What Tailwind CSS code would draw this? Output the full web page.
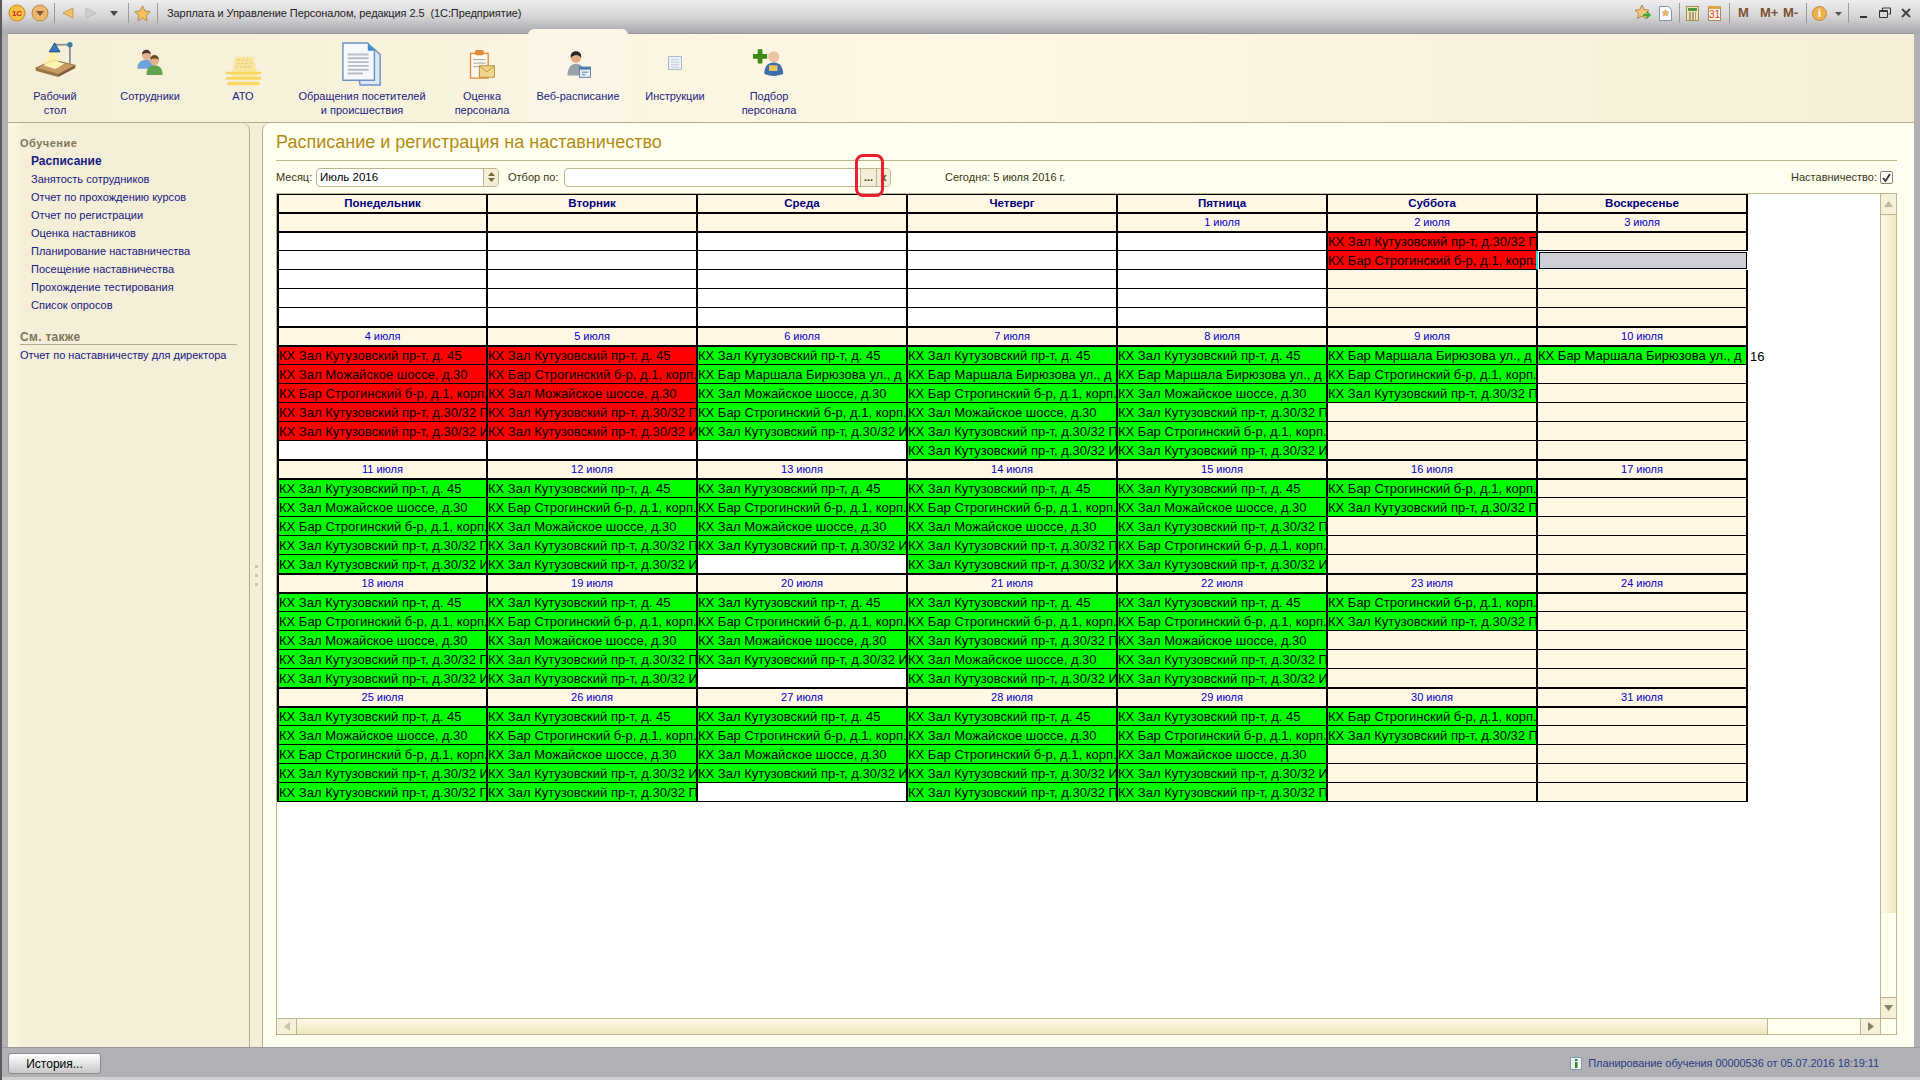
<!DOCTYPE html>
<html lang="ru">
<head>
<meta charset="UTF-8">
<title>Зарплата и Управление Персоналом</title>
<script src="https://cdn.jsdelivr.net/npm/@tailwindcss/browser@4"></script>
</head>
<body class="bg-[#b0b0b4]">
<div class="relative w-[1920px] h-[1080px] overflow-hidden flex flex-col font-['Liberation_Sans',Arial,sans-serif] text-[11px] bg-[#b1b1b5] border-l-2 border-[#5a5a5a]">

  <!-- title bar -->
  <header class="h-[33px] shrink-0 flex items-start pt-[3px] bg-linear-to-b from-[#eeeeee] via-[#d6d6d8] to-[#a9a9ad] text-[#222]">
    <div class="flex items-center h-[20px] w-full">
      <svg class="ml-[6px] w-[18px] h-[18px]" viewBox="0 0 18 18"><circle cx="9" cy="9" r="8" fill="#f6c244" stroke="#c8862a"/><text x="9" y="12" font-size="8" font-weight="700" text-anchor="middle" fill="#d4201c">1С</text></svg>
      <svg class="ml-[5px] w-[18px] h-[18px]" viewBox="0 0 18 18"><circle cx="9" cy="9" r="8" fill="#eeb66c" stroke="#b98a4c"/><path d="M5 7h8l-4 5z" fill="#7a5a34"/></svg>
      <div class="ml-[5px] w-px h-[20px] bg-[#9c9c9c]"></div>
      <svg class="ml-[6px] w-[14px] h-[14px]" viewBox="0 0 14 14"><path d="M12 2v10L2 7z" fill="#f2c26a" stroke="#c99a50"/></svg>
      <svg class="ml-[9px] w-[14px] h-[14px]" viewBox="0 0 14 14"><path d="M2 2v10l10-5z" fill="#cfcfcb" stroke="#bbb"/></svg>
      <svg class="ml-[11px] w-[10px] h-[10px]" viewBox="0 0 10 10"><path d="M1 3h8L5 8z" fill="#444"/></svg>
      <div class="ml-[9px] w-px h-[20px] bg-[#9c9c9c]"></div>
      <svg class="ml-[5px] w-[17px] h-[17px]" viewBox="0 0 18 18"><path d="M9 1l2.500 5.300 5.700.8-4.200 4 1 5.700L9 14l-5 2.800 1-5.700-4.200-4 5.700-.8z" fill="#f3c25c" stroke="#a98a4a"/></svg>
      <div class="ml-[6px] w-px h-[20px] bg-[#9c9c9c]"></div>
      <span class="ml-[9px] text-[11px] tracking-[-0.08px]">Зарплата и Управление Персоналом, редакция 2.5&nbsp; (1С:Предприятие)</span>

      <div class="ml-auto flex items-center pr-[8px]">
        <svg class="w-[18px] h-[18px]" viewBox="0 0 18 18"><path d="M8 1l2 4.600 5 .6-3.600 3.400 1 5L8 12l-4.400 2.600 1-5L1 6.200l5-.6z" fill="#f0c878" stroke="#a98a4a"/><path d="M9 10h4V7l4 4-4 4v-3H9z" fill="#3fa63a"/></svg>
        <svg class="ml-[7px] w-[13px] h-[15px]" viewBox="0 0 13 15"><path d="M.5.5h9l3 3v11H.5z" fill="#fff" stroke="#7f94ad"/><path d="M6.500 3.500l1 2.200 2.400.3-1.700 1.600.4 2.400-2.100-1.200-2.100 1.200.4-2.400L3.100 6l2.400-.3z" fill="#eeb858" stroke="#a98a4a" stroke-width=".5"/></svg>
        <div class="ml-[7px] w-px h-[20px] bg-[#9c9c9c]"></div>
        <svg class="ml-[6px] w-[13px] h-[15px]" viewBox="0 0 13 15"><rect x=".5" y=".5" width="12" height="14" fill="#f3e3b8" stroke="#a08c5c"/><rect x="2" y="2" width="9" height="3" fill="#4f9a3e"/><path d="M3 7h2M6 7h2M9 7h1M3 9h2M6 9h2M9 9h1M3 11h2M6 11h2M9 11h1M3 13h2M6 13h2M9 13h1" stroke="#6b5a3a"/></svg>
        <div class="ml-[9px] w-[13px] h-[15px] bg-[#fff6ea] border border-[#a08c5c] border-t-[3px] border-t-[#e0a24a] text-[#e0391c] text-[10px] leading-[11px] text-center">31</div>
        <div class="ml-[8px] w-px h-[20px] bg-[#9c9c9c]"></div>
        <span class="ml-[8px] w-[12px] text-[13px] font-bold text-[#7b5230]">M</span>
        <span class="ml-[10px] w-[18px] text-[13px] font-bold text-[#7b5230]">M+</span>
        <span class="ml-[5px] w-[18px] text-[13px] font-bold text-[#7b5230]">M-</span>
        <div class="ml-[5px] w-px h-[20px] bg-[#9c9c9c]"></div>
        <div class="ml-[5px] w-[15px] h-[15px] rounded-full bg-[#eeb24a] border border-[#b98a4c] text-white font-bold text-[11px] leading-[13px] text-center">i</div>
        <svg class="ml-[7px] w-[9px] h-[9px]" viewBox="0 0 9 9"><path d="M1 3h7L4.500 7z" fill="#555"/></svg>
        <div class="ml-[5px] w-px h-[20px] bg-[#9c9c9c]"></div>
        <svg class="ml-[9px] w-[12px] h-[12px]" viewBox="0 0 12 12"><path d="M2 10h7" stroke="#333" stroke-width="2"/></svg>
        <svg class="ml-[9px] w-[12px] h-[12px]" viewBox="0 0 12 12"><path d="M3.500 3V1h8v6H9.500M.5 3.500h8v7h-8zM.5 4.500h8" fill="none" stroke="#333"/></svg>
        <svg class="ml-[9px] w-[12px] h-[12px]" viewBox="0 0 12 12"><path d="M2 2l8 8M10 2l-8 8" stroke="#444" stroke-width="2"/></svg>
      </div>
    </div>
  </header>

  <!-- section toolbar -->
  <nav class="relative ml-[6px] w-[1906px] h-[90px] shrink-0 flex pl-[7px] bg-linear-to-r from-[#f5efd8] via-[#fef8e6] to-[#f5eed8] border-t border-[#9a9a9a] border-b border-b-[#b5ae8c] text-[#1a237e] text-[11px] leading-[14px] text-center">
    <div class="w-[80px]">
      <div class="h-[55px] flex justify-center items-start">
        <svg class="mt-[8px] w-[49px] h-[36px]" viewBox="0 4 50 40"><path d="M3 33l20-9 24 6-19 10z" fill="#c79a63" stroke="#8c6a3e"/><path d="M3 33v3l25 7v-3z" fill="#9c7344"/><path d="M28 40v3l19-10v-3z" fill="#7d5a32"/><path d="M12 30l10-5 13 3-10 6z" fill="#fff6cf"/><path d="M20 13l-8 17 18 2-4-19z" fill="#fff3a0" opacity=".8"/><path d="M41 7v22" stroke="#8a8f96" stroke-width="2"/><path d="M24 7h17" stroke="#8a8f96" stroke-width="2"/><path d="M18 15l6-10 6 10z" fill="#3577b8" stroke="#1f4f80"/><circle cx="41" cy="7" r="3" fill="#3a7ea8"/></svg>
      </div>
      <span>Рабочий<br>стол</span>
    </div>
    <div class="w-[110px]">
      <div class="h-[55px] flex justify-center items-start">
        <svg class="mt-[15px] w-[28px] h-[27px]" viewBox="0 0 30 30"><circle cx="11" cy="7" r="5" fill="#e6b28e"/><path d="M6 6c0-7 10-7 10 0-3-2-6-2-10 0z" fill="#4a3a2c"/><path d="M1 22c0-8 5-10 10-10s8 2 8 10z" fill="#6ea4dc"/><circle cx="20" cy="13" r="5" fill="#e6b28e"/><path d="M15 12c0-7 10-7 10 0-3-2-6-2-10 0z" fill="#6a4a2a"/><path d="M11 29c0-8 4-11 9-11s9 3 9 11z" fill="#62a24e"/></svg>
      </div>
      <span>Сотрудники</span>
    </div>
    <div class="w-[76px]">
      <div class="h-[55px] flex justify-center items-start">
        <svg class="mt-[21px] w-[39px] h-[32px]" viewBox="0 0 42 38"><path d="M11 2h22l6 28H6z" fill="#fbe6a0"/><path d="M0 20h42v3H0zM0 26h42v3H0zM2 32h38v4H2z" fill="#fbd660"/><path d="M14 6h16M13 10h18M12 14h20" stroke="#efcf7a" stroke-width="2" stroke-dasharray="3 2"/></svg>
      </div>
      <span>АТО</span>
    </div>
    <div class="ml-[7px] w-[148px]">
      <div class="h-[55px] flex justify-center items-start">
        <svg class="mt-[8px] w-[42px] h-[44px]" viewBox="0 0 44 46"><path d="M14 5h18l9 8v32H20z" fill="#dfe7f2" stroke="#6b93c6" stroke-width="1.500"/><path d="M2 1h26l7 8v31H2z" fill="#f6f8fb" stroke="#6b93c6" stroke-width="1.500"/><path d="M28 1v8h7z" fill="#3f8fd0"/><path d="M7 13h22M7 17h22M7 21h22M7 25h22M7 29h22M7 33h16" stroke="#b7bec8" stroke-width="2"/></svg>
      </div>
      <span>Обращения посетителей<br>и происшествия</span>
    </div>
    <div class="w-[92px]">
      <div class="h-[55px] flex justify-center items-start">
        <svg class="mt-[15px] w-[28px] h-[30px]" viewBox="0 0 30 34"><rect x="2" y="5" width="20" height="28" fill="#fff9ee" stroke="#e08a3a" stroke-width="1.500"/><rect x="7" y="1" width="10" height="6" rx="2" fill="#e08a3a"/><path d="M5 12h14M5 16h14M5 20h10" stroke="#8a9aa8"/><rect x="12" y="19" width="17" height="13" fill="#f2d68a" stroke="#a88a3e"/><path d="M12 19l8.500 7 8.500-7" fill="none" stroke="#a88a3e"/></svg>
      </div>
      <span>Оценка<br>персонала</span>
    </div>
    <div class="-mt-[5px] h-[93px] w-[100px] rounded-t-md bg-[#fbf6e6]">
      <div class="h-[60px] flex justify-center items-start">
        <svg class="mt-[21px] w-[29px] h-[29px]" viewBox="0 0 30 34"><circle cx="12" cy="9" r="6" fill="#e2ad88"/><path d="M6 9c-2-10 14-10 12 0-3-4-8-4-12 0z" fill="#262626"/><path d="M2 30c0-10 5-14 10-14 5 0 8 3 9 8l-4 6z" fill="#9aa3ac"/><rect x="16" y="20" width="13" height="12" fill="#e8eef5" stroke="#4a6d96"/><rect x="16" y="20" width="13" height="3" fill="#4a7dae"/><path d="M19 26h7M19 29h4" stroke="#4a6d96"/></svg>
      </div>
      <span>Веб-расписание</span>
    </div>
    <div class="w-[94px]">
      <div class="h-[55px] flex justify-center items-start">
        <svg class="mt-[22px] w-[14px] h-[14px]" viewBox="0 0 14 16" preserveAspectRatio="none"><path d="M.5.5h13v15H.5z" fill="#eef2f6" stroke="#9fb4c8"/><path d="M3 4h8M3 7h8M3 10h8M3 13h8" stroke="#c2ccd6"/></svg>
      </div>
      <span>Инструкции</span>
    </div>
    <div class="w-[94px]">
      <div class="h-[55px] flex justify-center items-start">
        <svg class="mt-[14px] w-[32px] h-[29px]" viewBox="0 0 34 28"><circle cx="22" cy="8" r="6" fill="#eec4a6"/><path d="M12 26c0-8 4-12 10-12s10 4 10 12c-6 3-14 3-20 0z" fill="#3d6db0"/><rect x="17" y="17" width="9" height="6" fill="#e8c75a"/><path d="M5 0h5v5h5v5h-5v5H5v-5H0V5h5z" fill="#3f8a12"/></svg>
      </div>
      <span>Подбор<br>персонала</span>
    </div>
  </nav>

  <div class="flex ml-[6px] w-[1906px] h-[924px] shrink-0 bg-[#f5eed8]">
    <!-- left menu -->
    <aside class="w-[242px] pl-[12px] pt-[11px] border-r border-[#b5ae8c] rounded-tr-lg bg-linear-to-r from-[#f9f6de] from-[5px] to-[#f5eed8] to-[16px] text-[#152080] text-[11px] leading-[18px] shrink-0">
      <div class="font-bold text-[#7c7658] tracking-[0.5px]">Обучение</div>
      <ul class="pl-[11px]">
        <li class="font-bold text-[12px]">Расписание</li>
        <li>Занятость сотрудников</li>
        <li>Отчет по прохождению курсов</li>
        <li>Отчет по регистрации</li>
        <li>Оценка наставников</li>
        <li>Планирование наставничества</li>
        <li>Посещение наставничества</li>
        <li>Прохождение тестирования</li>
        <li>Список опросов</li>
      </ul>
      <div class="mt-[16px] mr-[12px] font-bold text-[12px] text-[#7c7658] tracking-[0.3px] border-b border-[#b5ae8c] leading-[14px]">См. также</div>
      <div class="mt-[1px] whitespace-nowrap">Отчет по наставничеству для директора</div>
    </aside>

    <!-- splitter -->
    <div class="w-[12px] shrink-0 flex flex-col items-center justify-center gap-[6px] pb-[20px]">
      <div class="w-[3px] h-[3px] bg-[#cfc8a8]"></div>
      <div class="w-[3px] h-[3px] bg-[#cfc8a8]"></div>
      <div class="w-[3px] h-[3px] bg-[#cfc8a8]"></div>
    </div>

    <!-- main form -->
    <main class="flex-1 min-w-0 flex flex-col pl-[13px] pr-[17px] bg-[#fffff0] border-l border-[#b5ae8c] rounded-tl-lg">
      <h1 class="h-[38px] leading-[38px] text-[18px] text-[#b38b12] border-b border-[#bdb58e] shrink-0">Расписание и регистрация на наставничество</h1>
      <div class="h-[32px] shrink-0 flex items-center text-[#3a3412]">
        <span class="w-[35px] whitespace-nowrap">Месяц:</span>
        <div class="ml-[5px] w-[183px] h-[19px] flex justify-between bg-white border border-[#bdb58e] rounded-[4px] overflow-hidden">
          <span class="pl-[3px] text-black text-[11.500px] leading-[17px]">Июль 2016</span>
          <div class="w-[15px] border-l border-[#bdb58e] bg-[#f5eed8] flex flex-col items-center justify-center gap-[2px]">
            <svg class="w-[7px] h-[4px]" viewBox="0 0 7 4"><path d="M0 4h7L3.500 0z" fill="#7a6a3c"/></svg>
            <svg class="w-[7px] h-[4px]" viewBox="0 0 7 4"><path d="M0 0h7L3.500 4z" fill="#7a6a3c"/></svg>
          </div>
        </div>
        <span class="ml-[9px] w-[49px] whitespace-nowrap">Отбор по:</span>
        <div class="ml-[7px] w-[327px] h-[19px] flex justify-end bg-white border border-[#bdb58e] rounded-[4px] overflow-hidden">
          <div class="w-[16px] bg-[#f5eed8] border-l border-[#bdb58e] text-center leading-[17px] text-[#3a3412] font-bold">...</div>
          <div class="w-[14px] bg-[#f5eed8] border-l border-[#bdb58e] text-center leading-[16px] text-[#4a4420] font-bold">x</div>
        </div>
        <span class="ml-[54px]">Сегодня: 5 июля 2016 г.</span>
        <span class="ml-auto">Наставничество:</span>
        <div class="ml-[3px] mr-[4px] w-[13px] h-[13px] bg-white border border-[#8a8468] rounded-[2px]">
          <svg viewBox="0 0 11 11"><path d="M2 6l2.500 3L9 2" fill="none" stroke="#333" stroke-width="1.800"/></svg>
        </div>
      </div>

      <!-- grid frame -->
      <div class="w-[1621px] h-[842px] shrink-0 flex flex-col bg-white border border-[#bdb58e]">
        <div class="flex-1 min-h-0 flex">
          <div class="relative flex-1 min-w-0">
            <div id="grid" class="grid grid-cols-[209px_repeat(6,210px)] w-[1471px] border-l-2 border-t border-black text-black text-[13px]"></div>
            <span class="absolute left-[1473px] top-[154px] text-[13px] leading-[17px] text-black">16</span>
          </div>
          <div class="w-[16px] shrink-0 flex flex-col border-l border-[#bdb58e]">
            <div class="h-[21px] border-b border-[#bdb58e] bg-[#f7f1da] flex items-center justify-center"><svg class="w-[9px] h-[6px]" viewBox="0 0 9 6"><path d="M0 6h9L4.500 0z" fill="#bbb8a8"/></svg></div>
            <div class="h-[698px] bg-linear-to-r from-[#fdf9e6] to-[#efe7c0]"></div>
            <div class="flex-1 bg-[#fffff0]"></div>
            <div class="h-[21px] border-t border-[#bdb58e] bg-[#f7f1da] flex items-center justify-center"><svg class="w-[9px] h-[6px]" viewBox="0 0 9 6"><path d="M0 0h9L4.500 6z" fill="#85826f"/></svg></div>
          </div>
        </div>
        <div class="h-[16px] shrink-0 flex border-t border-[#bdb58e]">
          <div class="w-[20px] bg-[#f7f1da] border-r border-[#bdb58e] flex items-center justify-center"><svg class="w-[6px] h-[9px]" viewBox="0 0 6 9"><path d="M6 0v9L0 4.500z" fill="#c9c6b6"/></svg></div>
          <div class="w-[1471px] bg-linear-to-b from-[#fdf9e6] to-[#efe7c0] border-r border-[#bdb58e]"></div>
          <div class="flex-1 bg-[#fffff0]"></div>
          <div class="w-[21px] bg-[#f7f1da] border-x border-[#bdb58e] flex items-center justify-center"><svg class="w-[6px] h-[9px]" viewBox="0 0 6 9"><path d="M0 0v9l6-4.500z" fill="#85826f"/></svg></div>
          <div class="w-[15px] bg-[#fffff0]"></div>
        </div>
      </div>
    </main>
  </div>

  <!-- status bar -->
  <footer class="flex-1 min-h-0 flex items-start pt-[5px] pl-[6px] pr-[41px] justify-between border-t border-[#9a9a9a] border-b-[3px] border-b-[#d0d0d0]">
    <button class="w-[93px] h-[21px] text-center rounded-[3px] border border-[#8c8c8c] bg-linear-to-b from-white to-[#c8c8c8] text-black text-[12px]">История...</button>
    <div class="flex items-center h-[21px] text-[#2a3a80] text-[11px]">
      <svg class="w-[12px] h-[13px] mr-[6px]" viewBox="0 0 12 13"><path d="M.5.5h11v12H.5z" fill="#eef3f8" stroke="#7f94ad"/><path d="M5 5h2.500v6H5z" fill="#2f8a1e"/><path d="M5 2h2.500v2H5z" fill="#2f8a1e"/></svg>
      <span class="tracking-[-0.08px]">Планирование обучения 00000536 от 05.07.2016 18:19:11</span>
    </div>
  </footer>

  <!-- red annotation round the "..." button -->
  <div class="absolute left-[853px] top-[154px] w-[29px] h-[43px] border-[3px] border-[#e6202c] rounded-lg"></div>
</div>

<script>
  const K = 'КХ Зал Кутузовский пр-т, д. 45';
  const M = 'КХ Зал Можайское шоссе, д.30';
  const S = 'КХ Бар Строгинский б-р, д.1, корп.';
  const B = 'КХ Бар Маршала Бирюзова ул., д';
  const P = 'КХ Зал Кутузовский пр-т, д.30/32 П';
  const I = 'КХ Зал Кутузовский пр-т, д.30/32 И';

  const weeks = [
    { rows: 5, dates: ['', '', '', '', '1 июля', '2 июля', '3 июля'], reds: [5],
      days: [[], [], [], [], [], [P, S], []] },
    { rows: 6, dates: ['4 июля', '5 июля', '6 июля', '7 июля', '8 июля', '9 июля', '10 июля'], reds: [0, 1],
      days: [[K, M, S, P, I], [K, S, M, P, I], [K, B, M, S, I], [K, B, S, M, P, I], [K, B, M, P, S, I], [B, S, P], [B]] },
    { rows: 5, dates: ['11 июля', '12 июля', '13 июля', '14 июля', '15 июля', '16 июля', '17 июля'], reds: [],
      days: [[K, M, S, P, I], [K, S, M, P, I], [K, S, M, I], [K, S, M, P, I], [K, M, P, S, I], [S, P], []] },
    { rows: 5, dates: ['18 июля', '19 июля', '20 июля', '21 июля', '22 июля', '23 июля', '24 июля'], reds: [],
      days: [[K, S, M, P, I], [K, S, M, P, I], [K, S, M, I], [K, S, P, M, I], [K, S, M, P, I], [S, P], []] },
    { rows: 5, dates: ['25 июля', '26 июля', '27 июля', '28 июля', '29 июля', '30 июля', '31 июля'], reds: [],
      days: [[K, M, S, I, P], [K, S, M, I, P], [K, S, M, I], [K, M, S, I, P], [K, S, M, I, P], [S, P], []] },
  ];

  const base = 'border-r-2 border-black overflow-hidden whitespace-nowrap flex items-center ';
  const names = ['Понедельник', 'Вторник', 'Среда', 'Четверг', 'Пятница', 'Суббота', 'Воскресенье'];
  let html = '';

  names.forEach(n => {
    html += `<div class="${base}h-[19px] border-b-2 justify-center bg-[#fff6e3] font-bold text-[11.500px] text-[#000080]">${n}</div>`;
  });

  weeks.forEach((w, wi) => {
    w.dates.forEach(d => {
      html += `<div class="${base}h-[19px] border-b-2 justify-center bg-[#fff6e3] text-[11px] text-[#0000c8]">${d}</div>`;
    });
    for (let r = 0; r < w.rows; r++) {
      const first = r === 0;
      const last = r === w.rows - 1;
      const final = last && wi === weeks.length - 1;
      const rowCls = first ? 'h-[18px] border-b ' : final ? 'h-[19px] border-b ' : last ? 'h-[20px] border-b-2 ' : 'h-[19px] border-b ';
      w.days.forEach((items, c) => {
        const text = items[r] || '';
        let bg = c >= 5 ? 'bg-[#fff6e3] ' : 'bg-white ';
        if (text) bg = (wi === 0 || w.reds.includes(c)) ? 'bg-[#ff0000] ' : 'bg-[#00ff00] ';
        let extra = '';
        if (wi === 0 && c === 6 && r === 1) {
          bg = 'bg-[#cdced6] ';
          extra = 'border-t border-l border-white outline outline-black -outline-offset-2 ';
        }
        if (wi === 0 && c === 5 && r === 1) extra = 'border-r-[#28e0e8] ';
        html += `<div class="${base}${rowCls}${bg}${extra}pl-[1px] pt-[1px]">${text}</div>`;
      });
    }
  });

  document.getElementById('grid').innerHTML = html;
</script>
</body>
</html>
